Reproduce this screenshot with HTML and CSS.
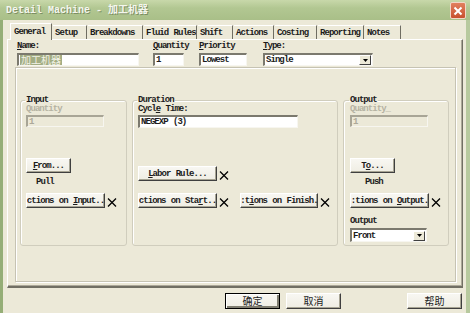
FILE: index.html
```html
<!DOCTYPE html>
<html>
<head>
<meta charset="utf-8">
<link rel="stylesheet" href="styles.css">
</head>
<body>
<div class="window">
  <div class="titlebar">
    <span class="title">Detail Machine - <span class="cjk">加工机器</span></span>
    <span class="close"><svg width="10" height="10" viewBox="0 0 10 10"><path d="M1.5 1.5 L8.5 8.5 M8.5 1.5 L1.5 8.5" stroke="#fff" stroke-width="2" fill="none"/></svg></span>
  </div>
  <div class="main">
    <div class="tabs">
      <span class="tab active">General</span>
      <span class="tab">Setup</span>
      <span class="tab">Breakdowns</span>
      <span class="tab">Fluid Rules</span>
      <span class="tab">Shift</span>
      <span class="tab">Actions</span>
      <span class="tab">Costing</span>
      <span class="tab">Reporting</span>
      <span class="tab">Notes</span>
    </div>
    <div class="panel">
      <div class="toprow">
        <div class="field f-name">
          <span class="lbl"><u>N</u>ame:</span>
          <span class="input"><span class="hl cjk">加工机器</span></span>
        </div>
        <div class="field f-qty">
          <span class="lbl"><u>Q</u>uantity</span>
          <span class="input">1</span>
        </div>
        <div class="field f-pri">
          <span class="lbl"><u>P</u>riority</span>
          <span class="input">Lowest</span>
        </div>
        <div class="field f-type">
          <span class="lbl"><u>T</u>ype:</span>
          <span class="input combo"><span>Single</span><span class="arrow"><svg width="5" height="3" viewBox="0 0 5 3"><path d="M0 0 H5 L2.5 3 Z" fill="#000"/></svg></span></span>
        </div>
      </div>
      <div class="inner">
        <fieldset class="group g-input">
          <legend>Input</legend>
          <span class="lbl disabled">Quantity</span>
          <span class="input dis">1</span>
          <span class="btn b-from"><span><u>F</u>rom...</span></span>
          <span class="lbl sub s-pull">Pull</span>
          <div class="brow">
            <span class="btn b-act"><span>ctions on <u>I</u>nput..</span></span>
            <svg class="x" width="10" height="9" viewBox="0 0 10 9"><path d="M1 0.5 L9 8.5 M9 0.5 L1 8.5" stroke="#000" stroke-width="1.3" fill="none"/></svg>
          </div>
        </fieldset>
        <fieldset class="group g-dur">
          <legend>Duration</legend>
          <span class="lbl">Cycl<u>e</u> Time:</span>
          <span class="input cyc"><span>NEGEXP (3)</span></span>
          <div class="brow r-labor">
            <span class="btn b-act"><span><u>L</u>abor Rule...</span></span>
            <svg class="x" width="10" height="9" viewBox="0 0 10 9"><path d="M1 0.5 L9 8.5 M9 0.5 L1 8.5" stroke="#000" stroke-width="1.3" fill="none"/></svg>
          </div>
          <div class="brow r-acts">
            <span class="btn b-act"><span>ctions on Sta<u>r</u>t..</span></span>
            <svg class="x" width="10" height="9" viewBox="0 0 10 9"><path d="M1 0.5 L9 8.5 M9 0.5 L1 8.5" stroke="#000" stroke-width="1.3" fill="none"/></svg>
            <span class="btn b-fin"><span>:t<u>i</u>ons on Finish.</span></span>
            <svg class="x" width="10" height="9" viewBox="0 0 10 9"><path d="M1 0.5 L9 8.5 M9 0.5 L1 8.5" stroke="#000" stroke-width="1.3" fill="none"/></svg>
          </div>
        </fieldset>
        <fieldset class="group g-out">
          <legend>Output</legend>
          <span class="lbl disabled">Quantity_</span>
          <span class="input dis">1</span>
          <span class="btn b-to"><span>T<u>o</u>...</span></span>
          <span class="lbl sub s-push">Push</span>
          <div class="brow">
            <span class="btn b-act"><span>:tions on <u>O</u>utput.</span></span>
            <svg class="x" width="10" height="9" viewBox="0 0 10 9"><path d="M1 0.5 L9 8.5 M9 0.5 L1 8.5" stroke="#000" stroke-width="1.3" fill="none"/></svg>
          </div>
          <span class="lbl s-outlbl">Output</span>
          <span class="input combo c-front"><span>Front</span><span class="arrow"><svg width="5" height="3" viewBox="0 0 5 3"><path d="M0 0 H5 L2.5 3 Z" fill="#000"/></svg></span></span>
        </fieldset>
      </div>
    </div>
    <div class="footer">
      <span class="btn fbtn default cjk">确定</span>
      <span class="btn fbtn cjk">取消</span>
      <span class="spacer"></span>
      <span class="btn fbtn cjk">帮助</span>
    </div>
  </div>
</div>
</body>
</html>
```

FILE: styles.css
```css
* { box-sizing: border-box; }
html, body { margin: 0; padding: 0; }
body {
  width: 470px;
  height: 313px;
  overflow: hidden;
  background: #ece9d8;
  font-family: "Liberation Mono", monospace;
  font-size: 9px;
  font-weight: bold;
  letter-spacing: -0.95px;
  word-spacing: 0.8px;
  line-height: 10px;
  color: #1c1c1c;
  white-space: nowrap;
}
.cjk { font-family: "Noto Sans CJK SC", sans-serif; letter-spacing: 0; word-spacing: 0; font-weight: normal; }
u { text-decoration: underline; text-underline-offset: 1px; }

.window { width: 470px; height: 313px; display: flex; flex-direction: column; }

.titlebar {
  height: 20px;
  flex: none;
  display: flex;
  align-items: center;
  padding: 0 4px 0 6px;
  background: linear-gradient(#c8d8aa, #b2c792 40%, #a9bf88);
}
.title {
  flex: 1;
  font-size: 10px;
  letter-spacing: 0;
  word-spacing: 0;
  color: #f4f6ee;
  text-shadow: 1px 1px 0 #7d8f63;
}
.title .cjk { font-size: 10px; font-weight: bold; }
.close {
  width: 16px; height: 17px;
  margin-top: 1px;
  display: flex; align-items: center; justify-content: center;
  background: linear-gradient(#e1805e, #c8502f);
  border: 1px solid #f1d6c8;
  border-radius: 2px;
}

.main {
  flex: 1;
  border-left: 3px solid #95ae77;
  border-right: 4px solid #b7c99e;
  display: flex;
  flex-direction: column;
}

.tabs {
  height: 19px;
  flex: none;
  display: flex;
  align-items: flex-end;
  padding-left: 7px;
}
.tab {
  flex: none;
  height: 14px;
  padding: 0 0 0 2px;
  line-height: 14px;
  border-right: 1px solid #6f6d62;
  border-top: 1px solid #fff;
  margin-right: 1px;
  overflow: hidden;
}
.tab:nth-child(2) { width: 34px; }
.tab:nth-child(3) { width: 55px; }
.tab:nth-child(4) { width: 53px; }
.tab:nth-child(5) { width: 35px; }
.tab:nth-child(6) { width: 40px; }
.tab:nth-child(7) { width: 42px; }
.tab:nth-child(8) { width: 46px; }
.tab:nth-child(9) { width: 36px; }
.tab.active {
  height: 17px;
  width: 42px;
  padding-left: 3px;
  line-height: 16px;
  margin-bottom: -1px;
  margin-right: 1px;
  background: #ece9d8;
  border-left: 1px solid #fff;
  position: relative;
  z-index: 1;
}

.panel {
  margin-left: 4px;
  width: 456px;
  height: 249px;
  flex: none;
  border-top: 1px solid #fff;
  border-left: 1px solid #fff;
  border-right: 1px solid #716f64;
  border-bottom: 2px solid #716f64;
  box-shadow: inset -1px -1px 0 #aca899;
  display: flex;
  flex-direction: column;
}

.toprow { display: flex; height: 26px; padding-top: 2px; }
.field { display: flex; flex-direction: column; flex: none; }
.field .lbl { height: 10px; line-height: 8px; }
.field .input { margin-top: 1px; height: 13px; }
.f-name { margin-left: 9px; width: 122px; }
.f-qty { margin-left: 14px; width: 31px; }
.f-pri { margin-left: 15px; width: 48px; }
.f-type { margin-left: 16px; width: 110px; }

.input {
  display: flex;
  align-items: center;
  background: #fff;
  border-top: 2px solid #7b796e;
  border-left: 2px solid #7b796e;
  border-right: 1px solid #f7f6f0;
  border-bottom: 1px solid #f7f6f0;
  padding-left: 1px;
  line-height: 10px;
  overflow: hidden;
}
.hl { background: #a3ad83; color: #f2f2e6; font-size: 10px; line-height: 10px; padding: 0 1px; }
.input.dis { background: #ece9d8; color: #aca899; border-color: #a8a596 #f7f6f0 #f7f6f0 #a8a596; }
.combo { padding-right: 14px; }
.combo .arrow {
  margin-left: auto;
  margin-right: -13px;
  width: 12px;
  height: 10px;
  flex: none;
  display: flex; align-items: center; justify-content: center;
  background: #ece9d8;
  border: 1px solid;
  border-color: #fff #404040 #404040 #fff;
}

.inner {
  margin-left: 7px;
  margin-top: 1px;
  width: 441px;
  height: 215px;
  border: 1px solid #c6c3b3;
  box-shadow: 1px 1px 0 #fff, inset 1px 1px 0 #fff;
  display: flex;
  padding-left: 4px;
  padding-top: 27px;
  gap: 5px;
}

.group {
  margin: 0;
  padding: 0 0 0 5px;
  height: 151px;
  border: 1px solid #d0cdbd;
  border-radius: 3px;
  box-shadow: inset 1px 1px 0 #fff;
  display: flex;
  flex-direction: column;
  align-items: flex-start;
  min-width: 0;
}
.group legend {
  padding: 0 1px;
  margin-left: -1px;
  line-height: 10px;
}
.g-input { width: 107px; }
.g-dur { width: 206px; }
.g-out { width: 106px; padding-left: 6px; }

.lbl.disabled { color: #b5b2a2; }
.group > .lbl { line-height: 8px; height: 8px; }
.group .input.dis { margin-top: 2px; width: 78px; height: 12px; }
.cyc { margin-top: 2px; width: 160px; height: 13px; }

.btn {
  display: flex;
  align-items: center;
  justify-content: center;
  height: 15px;
  background: linear-gradient(#f8f7f2, #efede3);
  border: 1px solid;
  border-color: #fff #3f3f3f #3f3f3f #fff;
  box-shadow: inset -1px -1px 0 #a7a493;
  overflow: hidden;
  line-height: 10px;
}
.btn > span { flex: none; }
.b-from, .b-to { margin-top: 31px; width: 45px; }
.sub { margin-top: 5px; line-height: 8px; height: 8px; }
.s-pull { margin-left: 10px; }
.s-push { margin-left: 15px; }
.brow { display: flex; align-items: center; margin-top: 7px; }
.b-act { width: 79px; }
.b-fin { width: 78px; margin-left: 11px; }
.x { margin-left: 2px; margin-top: 4px; flex: none; }
.r-labor { margin-top: 38px; }
.r-acts { margin-top: 12px; }
.s-outlbl { margin-top: 9px; }
.c-front { margin-top: 3px; width: 77px; height: 14px; }

.footer {
  flex: 1;
  display: flex;
  align-items: flex-start;
  padding-top: 5px;
  padding-left: 222px;
}
.fbtn { width: 55px; height: 16px; font-size: 10px; }
.fbtn + .fbtn { margin-left: 6px; }
.fbtn.default { border-color: #000; box-shadow: inset 1px 1px 0 #fff, inset -2px -2px 0 #7f7d70; }
.spacer { width: 66px; }
```
